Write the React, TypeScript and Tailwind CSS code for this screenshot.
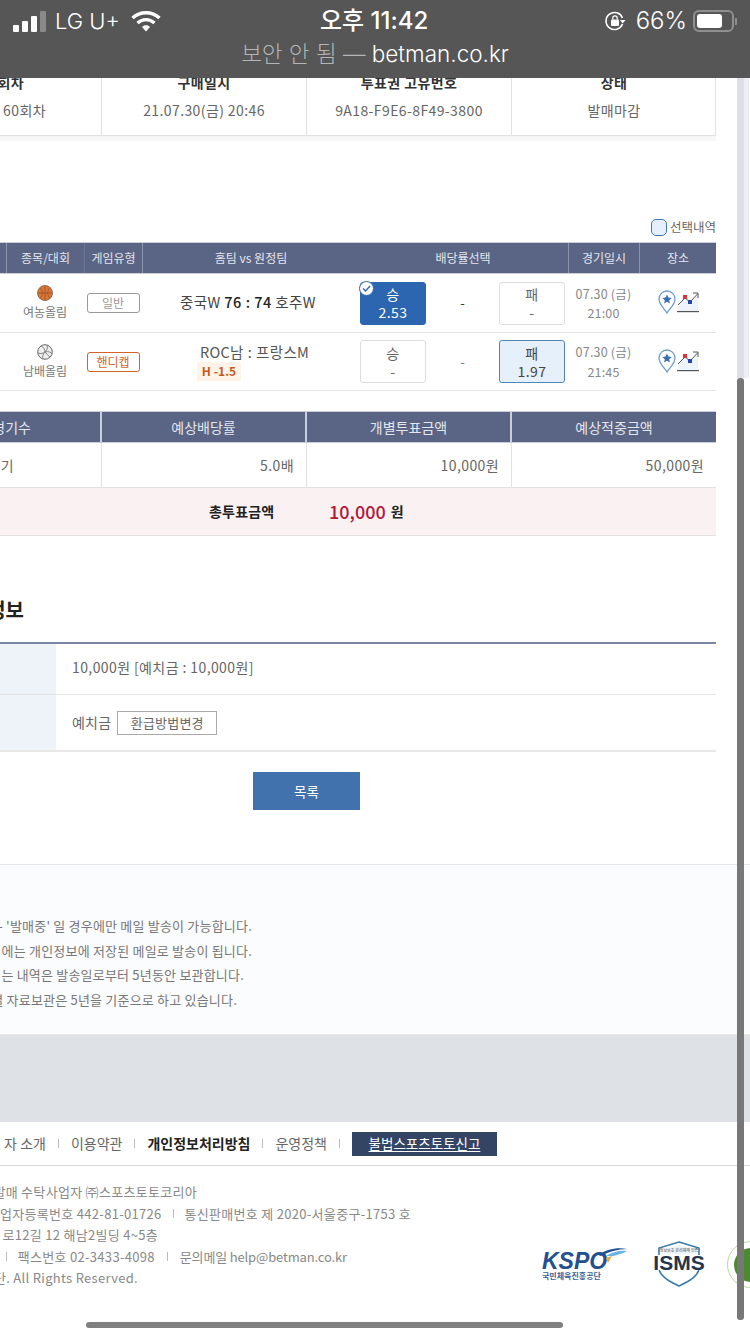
import React from 'react'

const font = { fontFamily: '"Noto Sans CJK KR", "Noto Sans", sans-serif' }

function Pin() {
  return (
    <svg width="18" height="24" viewBox="0 0 18 24" fill="none">
      <path d="M9 23 C7 19 1 15 1 9 A8 8 0 0 1 17 9 C17 15 11 19 9 23 Z" fill="#fff" stroke="#6f9bcf" strokeWidth="1.3" />
      <path d="M9 4.5 L10.4 7.6 L13.7 8 L11.2 10.2 L11.9 13.4 L9 11.8 L6.1 13.4 L6.8 10.2 L4.3 8 L7.6 7.6 Z" fill="#3d6fb0" />
    </svg>
  )
}

function Chart() {
  return (
    <svg width="22" height="22" viewBox="0 0 22 22" fill="none">
      <path d="M1 14 L8 7 L13 11 L21 4 V20 H1 Z" fill="#eef4fb" />
      <path d="M1 14 L8 7 L13 11 L20.5 3" stroke="#555" strokeWidth="1" />
      <path d="M16 2 H21 V7" stroke="#555" strokeWidth="1" />
      <rect x="6" y="4" width="4" height="4" fill="#e0343a" />
      <rect x="11" y="9" width="4" height="4" fill="#2346b5" />
      <rect x="0" y="20" width="22" height="1.2" fill="#555" />
    </svg>
  )
}

function Basketball() {
  return (
    <svg width="16" height="16" viewBox="0 0 16 16" fill="none">
      <circle cx="8" cy="8" r="7.5" fill="#d9773a" stroke="#8a5a3c" strokeWidth="0.8" />
      <path d="M1 8 H15 M8 1 V15 M3 2.8 C6 5.5 6 10.5 3 13.2 M13 2.8 C10 5.5 10 10.5 13 13.2" stroke="#8c4a22" strokeWidth="0.7" />
    </svg>
  )
}

function Volleyball() {
  return (
    <svg width="16" height="16" viewBox="0 0 16 16" fill="none">
      <circle cx="8" cy="8" r="7.3" fill="#eee" stroke="#666" strokeWidth="1" />
      <path d="M8 8 C8 5 6 2.5 4 2 M8 8 C11 7 14 8 15 10 M8 8 C6 10 5 13 6 15 M10 1.2 C11 4 10 6 8 8 M1 9 C4 10 6 9.5 8 8 M13 13 C11 11 9.5 10 8 8" stroke="#777" strokeWidth="0.9" />
    </svg>
  )
}

function OddsBox(props: { top: string; bottom: string; state?: 'on' | 'picked' }) {
  const cls =
    props.state === 'on'
      ? 'bg-[#2c66b0] border-[#2c66b0] text-white'
      : props.state === 'picked'
        ? 'bg-[#e6f0fb] border-[#4f86c0] text-[#444]'
        : 'bg-white border-[#dddddd] text-[#666]'
  return (
    <div className={`relative flex h-[43px] w-[66px] flex-col items-center justify-center rounded-[3px] border text-[14px] leading-[18px] tracking-[0.4px] ${cls}`}>
      {props.state === 'on' && (
        <div className="absolute -left-[2px] -top-[2px] flex h-[15px] w-[15px] items-center justify-center rounded-full border border-[#2c66b0] bg-white">
          <svg width="9" height="7" viewBox="0 0 9 7" fill="none">
            <path d="M1 3.5 L3.5 6 L8 1" stroke="#2c66b0" strokeWidth="1.4" />
          </svg>
        </div>
      )}
      <span>{props.top}</span>
      <span>{props.bottom}</span>
    </div>
  )
}

function GameRow(props: {
  ball: React.ReactNode
  league: string
  type: string
  typeCls: string
  team: React.ReactNode
  left: React.ReactNode
  right: React.ReactNode
  dash: string
  time: string
  h: string
}) {
  return (
    <div className={`grid grid-cols-[6px_78px_58px_426px_71px_77px] border-b border-[#e4e4e4] ${props.h}`}>
      <div />
      <div className="flex flex-col items-center justify-center gap-[3px] pb-[1px] text-[12px] leading-[16px] text-[#777]">
        {props.ball}
        <span>{props.league}</span>
      </div>
      <div className="flex items-center justify-center">
        <div className={`flex h-[20px] w-[53px] items-center justify-center rounded-[3px] border text-[12px] leading-none ${props.typeCls}`}>{props.type}</div>
      </div>
      <div className="grid grid-cols-[216px_1fr]">
        {props.team}
        <div className="flex items-center justify-between pl-[2px] pr-[3px]">
          {props.left}
          <span className={`text-[13px] ${props.dash}`}>-</span>
          {props.right}
        </div>
      </div>
      <div className="flex flex-col items-center justify-center text-[12.5px] leading-[19.5px] tracking-[0.2px] text-[#888]">
        <span>07.30 (금)</span>
        <span>{props.time}</span>
      </div>
      <div className="flex items-center justify-center gap-[1px] pb-[2px] pl-[2px]">
        <Pin />
        <Chart />
      </div>
    </div>
  )
}

function Kspo() {
  return (
    <div className="flex w-[92px] flex-col items-start">
      <div className="relative h-[24px] w-[88px]">
        <span className="absolute bottom-[2px] left-0 text-[23px] font-black italic leading-[16px] text-[#24508f]" style={{ fontFamily: '"Liberation Sans", sans-serif' }}>
          KSPO
        </span>
        <svg className="absolute left-[56px] top-0" width="30" height="20" viewBox="0 0 30 20" fill="none">
          <path d="M0 8 C8 3 18 0 29 2 C20 2 10 5 3 9 Z" fill="#1f4f92" />
          <path d="M8 9 C14 5 22 3 29 4 C24 7 19 8 15 9 Z" fill="#68b5e6" />
          <path d="M8 11 L14 9 L10 16 Z" fill="#f4a634" />
        </svg>
      </div>
      <span className="text-[8px] font-bold leading-[10px] text-[#3c6299]">국민체육진흥공단</span>
    </div>
  )
}

function Isms() {
  return (
    <div className="relative h-[46px] w-[52px]">
      <svg className="absolute inset-0" width="52" height="46" viewBox="0 0 52 46" fill="none">
        <path d="M26 1 L46 7 V27 C46 35 35 41 26 45 C17 41 6 35 6 27 V7 Z" fill="#fff" stroke="#3b7ba8" strokeWidth="1.6" />
        <path d="M26 4 L43 9 V13 H9 V9 Z" fill="#eef4f8" />
        <rect x="0" y="14" width="52" height="15" fill="#fff" />
      </svg>
      <span className="absolute left-0 top-[6px] w-[52px] text-center text-[4px] leading-[6px] text-[#444]">정보보호 관리체계 인증</span>
      <span className="absolute left-0 top-[13px] w-[52px] text-center text-[21px] font-bold leading-[18px] text-[#24354f]" style={{ fontFamily: '"Liberation Sans", sans-serif' }}>
        ISMS
      </span>
    </div>
  )
}

export default function App() {
  return (
    <div className="relative h-[1334px] w-[750px] overflow-hidden bg-white" style={font}>
      {/* 상단 상태바 */}
      <div className="relative z-10 h-[78px] bg-[#555655] text-white" style={{ fontFamily: 'Inter, "Noto Sans CJK KR", sans-serif' }}>
        <div className="relative flex h-[42px] items-center justify-between pl-[13px] pr-[13px]">
          <div className="flex items-center">
            <div className="flex items-end gap-[3px]">
              <div className="h-[7px] w-[6px] rounded-[1px] bg-white" />
              <div className="h-[11px] w-[6px] rounded-[1px] bg-white" />
              <div className="h-[16px] w-[6px] rounded-[1px] bg-white" />
              <div className="h-[21px] w-[6px] rounded-[1px] bg-[#8a8a8a]" />
            </div>
            <span className="ml-[9px] text-[22px] font-light leading-none">LG U+</span>
            <svg className="ml-[11px]" width="30" height="21" viewBox="0 0 30 21" fill="none">
              <path d="M1.5 7 C9 0 21 0 28.5 7" stroke="#fff" strokeWidth="3.4" />
              <path d="M6.5 12 C11.5 7.5 18.5 7.5 23.5 12" stroke="#fff" strokeWidth="3.2" />
              <path d="M11 16 L15 20.5 L19 16 C17 13.5 13 13.5 11 16 Z" fill="#fff" />
            </svg>
          </div>
          <span className="absolute left-[320px] top-[7px] text-[24px] font-medium leading-[28px]">오후 11:42</span>
          <div className="flex items-center">
            <svg width="22" height="22" viewBox="0 0 22 22" fill="none">
              <path d="M18.5 14 A8.5 8.5 0 1 1 18.5 8" stroke="#fff" strokeWidth="1.6" />
              <path d="M16 10 L21.5 10 L18.7 13.5 Z" fill="#fff" />
              <rect x="7" y="9.5" width="8" height="6.5" rx="1" fill="#fff" />
              <path d="M8.8 9.5 V8 A2.2 2.2 0 0 1 13.2 8 V9.5" stroke="#fff" strokeWidth="1.2" />
            </svg>
            <span className="ml-[10px] text-[24px] font-light leading-none">66%</span>
            <div className="ml-[6px] flex h-[22px] w-[41px] items-center rounded-[6px] border-2 border-[#8f8f8f] px-[2px]">
              <div className="h-[14px] w-[25px] rounded-[3px] bg-white" />
            </div>
            <div className="ml-[1px] h-[7px] w-[2px] rounded-r-[1px] bg-[#8f8f8f]" />
          </div>
        </div>
        <div className="text-center text-[22.5px] font-light leading-[24px]">
          <span className="text-[#b5b5b5]">보안 안 됨 — </span>
          <span>betman.co.kr</span>
        </div>
      </div>

      <div className="w-[716px]">
        {/* 투표권 정보 */}
        <div className="grid h-[58px] grid-cols-[102px_205px_205px_204px] border-b border-r border-[#e2e2e2] text-[14px] tracking-[0.4px] text-[#666] shadow-[0_5px_0_#f7f7f7]">
          <div className="flex flex-col items-end whitespace-nowrap border-r border-[#e2e2e2] pr-[55px]">
            <span className="-mt-[5px] h-[18px] pr-[22px] font-bold leading-[18px] text-[#333]">회차</span>
            <span className="mt-[9px] leading-[20px]">60회차</span>
          </div>
          <div className="flex flex-col items-center border-r border-[#e2e2e2]">
            <span className="-mt-[5px] h-[18px] font-bold leading-[18px] text-[#333]">구매일시</span>
            <span className="mt-[9px] leading-[20px]">21.07.30(금) 20:46</span>
          </div>
          <div className="flex flex-col items-center border-r border-[#e2e2e2]">
            <span className="-mt-[5px] h-[18px] font-bold leading-[18px] text-[#333]">투표권 고유번호</span>
            <span className="mt-[9px] leading-[20px]">9A18-F9E6-8F49-3800</span>
          </div>
          <div className="flex flex-col items-center">
            <span className="-mt-[5px] h-[18px] font-bold leading-[18px] text-[#333]">상태</span>
            <span className="mt-[9px] leading-[20px]">발매마감</span>
          </div>
        </div>

        {/* 선택내역 */}
        <div className="mt-[79px] flex h-[27px] items-center justify-end gap-[3px] pb-[2px] text-[12.5px] text-[#666]">
          <div className="h-[17px] w-[16px] rounded-[5px] border border-[#3f78b5] bg-[#e6f0fb]" />
          <span>선택내역</span>
        </div>
        <div className="grid h-[32px] grid-cols-[7px_78px_58px_426px_71px_76px] border-y border-[#c9ced9] bg-[#5a6484] text-[12px] text-[#e3e6ee]">
          <div className="border-r border-[#8d95ac]" />
          <div className="flex items-center justify-center border-r border-[#6c7591]">종목/대회</div>
          <div className="flex items-center justify-center border-r border-[#8d95ac]">게임유형</div>
          <div className="grid grid-cols-[216px_1fr] border-r border-[#8d95ac]">
            <div className="flex items-center justify-center">홈팀 vs 원정팀</div>
            <div className="flex items-center justify-center pr-[1px]">배당률선택</div>
          </div>
          <div className="flex items-center justify-center border-r border-[#8d95ac]">경기일시</div>
          <div className="flex items-center justify-center">장소</div>
        </div>
        <GameRow
          h="h-[59px]"
          ball={<Basketball />}
          league="여농올림"
          type="일반"
          typeCls="border-[#999] text-[#999]"
          team={
            <div className="flex items-center justify-center pb-[2px] pr-[4px] text-[14.5px] tracking-[0.4px] text-[#444]">
              <span>
                중국W <b className="font-medium text-[#222]">76<span className="mx-[4px]">:</span>74</b> 호주W
              </span>
            </div>
          }
          left={<OddsBox top="승" bottom="2.53" state="on" />}
          right={<OddsBox top="패" bottom="-" />}
          dash="text-[#333]"
          time="21:00"
        />
        <GameRow
          h="h-[58px]"
          ball={<Volleyball />}
          league="남배올림"
          type="핸디캡"
          typeCls="border-[#d2622a] text-[#d2622a]"
          team={
            <div className="flex flex-col items-start justify-center pb-[1px] pl-[55px] text-[14.5px] leading-[20px] tracking-[0.3px] text-[#555]">
              <span className="whitespace-nowrap pl-[3px]">
                ROC남<span className="mx-[4px]">:</span>프랑스M
              </span>
              <span className="flex h-[19px] w-[44px] items-center justify-center rounded-[2px] bg-[#fdf3e8] text-[12px] font-bold leading-none tracking-normal text-[#c8591c]">H -1.5</span>
            </div>
          }
          left={<OddsBox top="승" bottom="-" />}
          right={<OddsBox top="패" bottom="1.97" state="picked" />}
          dash="text-[#777]"
          time="21:45"
        />

        {/* 배당/금액 */}
        <div className="mt-[20px] grid h-[32px] grid-cols-[102px_205px_205px_204px] border-y border-[#c9ced9] bg-[#5a6484] text-[14px] text-[#e3e6ee]">
          <div className="flex items-center justify-end whitespace-nowrap border-r-2 border-[#c9ced9] pr-[69px]">경기수</div>
          <div className="flex items-center justify-center border-r-2 border-[#c9ced9]">예상배당률</div>
          <div className="flex items-center justify-center border-r-2 border-[#c9ced9]">개별투표금액</div>
          <div className="flex items-center justify-center">예상적중금액</div>
        </div>
        <div className="grid h-[45px] grid-cols-[102px_205px_205px_204px] border-b border-[#e2e2e2] text-[14px] tracking-[0.4px] text-[#666]">
          <div className="flex items-center justify-end whitespace-nowrap border-r border-[#e2e2e2] pr-[87px]">기</div>
          <div className="flex items-center justify-end border-r border-[#e2e2e2] pr-[12px]">5.0배</div>
          <div className="flex items-center justify-end border-r border-[#e2e2e2] pr-[12px]">10,000원</div>
          <div className="flex items-center justify-end pr-[12px]">50,000원</div>
        </div>
        <div className="flex h-[48px] items-center border-b border-[#e2e2e2] bg-[#f9f1f2] pb-[1px] pl-[209px]">
          <span className="w-[120px] text-[14px] font-bold tracking-[0.2px] text-[#222]">총투표금액</span>
          <span className="text-[18px] font-medium text-[#b3173c]">10,000</span>
          <span className="ml-[5px] text-[14px] font-bold text-[#222]">원</span>
        </div>

        {/* 환급 정보 */}
        <div className="mt-[59px] flex h-[30px] items-center justify-end whitespace-nowrap pr-[692px] text-[20px] font-bold leading-[30px] text-[#222]">
          환급정보
        </div>
        <div className="mt-[17px] border-t-2 border-[#7a86a3]">
          <div className="flex h-[51px] border-b border-[#e2e2e2]">
            <div className="w-[56px] bg-[#eef2f9]" />
            <div className="flex items-center pb-[3px] pl-[16px] text-[14px] tracking-[0.4px] text-[#666]">10,000원 [예치금 : 10,000원]</div>
          </div>
          <div className="flex h-[57px] border-b-2 border-[#e8e8e8]">
            <div className="w-[56px] bg-[#eef2f9]" />
            <div className="flex items-center gap-[6px] pl-[16px] text-[14px] tracking-[0.2px] text-[#666]">
              <span>예치금</span>
              <div className="flex h-[24px] w-[100px] items-center justify-center border border-[#aaa] text-[13px]">환급방법변경</div>
            </div>
          </div>
        </div>
        <div className="mt-[20px] flex h-[38px] w-[360px] justify-end">
          <div className="flex w-[107px] items-center justify-center bg-[#4172ae] text-[13.5px] text-white">목록</div>
        </div>
      </div>

      {/* 안내문 */}
      <div className="mt-[54px] h-[171px] border-y border-[#e8e9ec] bg-[#fbfcfe] pt-[49px] text-[13px] leading-[24.5px] tracking-[0.2px] text-[#777]">
        <div className="flex w-[252px] justify-end whitespace-nowrap">- '발매중' 일 경우에만 메일 발송이 가능합니다.</div>
        <div className="flex w-[252px] justify-end whitespace-nowrap">에는 개인정보에 저장된 메일로 발송이 됩니다.</div>
        <div className="flex w-[244px] justify-end whitespace-nowrap">는 내역은 발송일로부터 5년동안 보관합니다.</div>
        <div className="flex w-[237px] justify-end whitespace-nowrap">별 자료보관은 5년을 기준으로 하고 있습니다.</div>
      </div>
      <div className="h-[87px] bg-[#dee1e6]" />

      {/* 푸터 */}
      <div className="flex h-[43px] w-[497px] items-center justify-end whitespace-nowrap text-[14px] text-[#666]">
        <span>자 소개</span>
        <span className="mx-[12px] h-[9px] w-px bg-[#bbb]" />
        <span>이용약관</span>
        <span className="mx-[12px] h-[9px] w-px bg-[#bbb]" />
        <span className="font-bold text-[#222]">개인정보처리방침</span>
        <span className="mx-[12px] h-[9px] w-px bg-[#bbb]" />
        <span>운영정책</span>
        <span className="mx-[12px] h-[9px] w-px bg-[#bbb]" />
        <span className="flex h-[24px] w-[145px] items-center justify-center bg-[#344465] text-[13.5px] text-white underline underline-offset-2">불법스포츠토토신고</span>
      </div>
      <div className="flex border-t border-[#dcdcdc] pt-[15px]">
        <div className="w-[542px] shrink-0 text-[13px] leading-[21.5px] tracking-[0.3px] text-[#888]">
          <div className="flex w-[197px] justify-end whitespace-nowrap">발매 수탁사업자 ㈜스포츠토토코리아</div>
          <div className="flex w-[411px] justify-end whitespace-nowrap">
            업자등록번호 442-81-01726<span className="mx-[11px] my-auto h-[9px] w-px bg-[#bbb]" />통신판매번호 제 2020-서울중구-1753 호
          </div>
          <div className="flex w-[158px] justify-end whitespace-nowrap">로12길 12 해남2빌딩 4~5층</div>
          <div className="flex w-[347px] justify-end whitespace-nowrap">
            <span className="mr-[11px] my-auto h-[9px] w-px bg-[#bbb]" />팩스번호 02-3433-4098<span className="mx-[12px] my-auto h-[9px] w-px bg-[#bbb]" />
            <span className="tracking-[-0.15px]">문의메일 help@betman.co.kr</span>
          </div>
          <div className="flex w-[138px] justify-end whitespace-nowrap">공단. All Rights Reserved.</div>
        </div>
        <div className="flex items-start pt-[66px]">
          <Kspo />
          <div className="-mt-[6px] ml-[19px]">
            <Isms />
          </div>
          <div className="-mt-[6px] ml-[22px] flex h-[47px] w-[47px] shrink-0 items-center justify-center rounded-full border border-[#b7d9a0] bg-white">
            <div className="h-[34px] w-[34px] rounded-full bg-[#4b8a2e]" />
          </div>
        </div>
      </div>

      {/* 스크롤바 */}
      <div className="absolute left-[737px] top-[78px] h-[300px] w-[7px] bg-[#dde0e5]" />
      <div className="absolute left-[744px] top-[78px] h-[300px] w-[5px] bg-[#eceef1]" />
      <div className="absolute left-[737px] top-[378px] h-[942px] w-[7px] rounded-[3px] bg-[#777]" />
      <div className="absolute bottom-[6px] left-[86px] h-[6px] w-[477px] rounded-[3px] bg-[#808080]" />
    </div>
  )
}
